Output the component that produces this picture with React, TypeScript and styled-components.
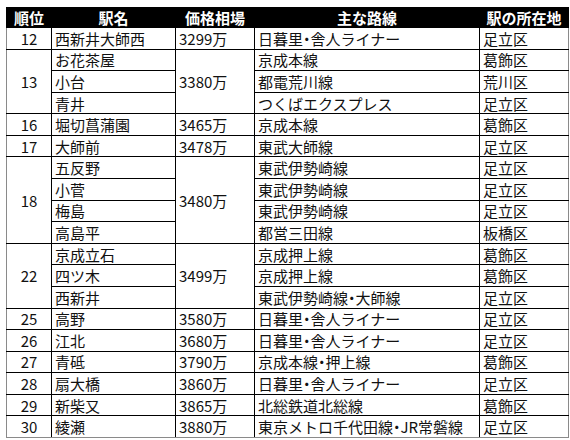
import styled, { createGlobalStyle } from "styled-components";

const GlobalStyle = createGlobalStyle`
  html, body {
    margin: 0;
    padding: 0;
    background: #fff;
  }
  body {
    font-family: "Noto Sans CJK JP", "Noto Sans", sans-serif;
  }
`;

interface Station {
  name: string;
  line: string;
  ward: string;
}

interface Group {
  rank: number;
  price: string;
  stations: Station[];
}

const groups: Group[] = [
  { rank: 12, price: "3299万", stations: [{ name: "西新井大師西", line: "日暮里・舎人ライナー", ward: "足立区" }] },
  {
    rank: 13,
    price: "3380万",
    stations: [
      { name: "お花茶屋", line: "京成本線", ward: "葛飾区" },
      { name: "小台", line: "都電荒川線", ward: "荒川区" },
      { name: "青井", line: "つくばエクスプレス", ward: "足立区" },
    ],
  },
  { rank: 16, price: "3465万", stations: [{ name: "堀切菖蒲園", line: "京成本線", ward: "葛飾区" }] },
  { rank: 17, price: "3478万", stations: [{ name: "大師前", line: "東武大師線", ward: "足立区" }] },
  {
    rank: 18,
    price: "3480万",
    stations: [
      { name: "五反野", line: "東武伊勢崎線", ward: "足立区" },
      { name: "小菅", line: "東武伊勢崎線", ward: "足立区" },
      { name: "梅島", line: "東武伊勢崎線", ward: "足立区" },
      { name: "高島平", line: "都営三田線", ward: "板橋区" },
    ],
  },
  {
    rank: 22,
    price: "3499万",
    stations: [
      { name: "京成立石", line: "京成押上線", ward: "葛飾区" },
      { name: "四ツ木", line: "京成押上線", ward: "葛飾区" },
      { name: "西新井", line: "東武伊勢崎線・大師線", ward: "足立区" },
    ],
  },
  { rank: 25, price: "3580万", stations: [{ name: "高野", line: "日暮里・舎人ライナー", ward: "足立区" }] },
  { rank: 26, price: "3680万", stations: [{ name: "江北", line: "日暮里・舎人ライナー", ward: "足立区" }] },
  { rank: 27, price: "3790万", stations: [{ name: "青砥", line: "京成本線・押上線", ward: "葛飾区" }] },
  { rank: 28, price: "3860万", stations: [{ name: "扇大橋", line: "日暮里・舎人ライナー", ward: "足立区" }] },
  { rank: 29, price: "3865万", stations: [{ name: "新柴又", line: "北総鉄道北総線", ward: "葛飾区" }] },
  { rank: 30, price: "3880万", stations: [{ name: "綾瀬", line: "東京メトロ千代田線・JR常磐線", ward: "足立区" }] },
];

const Page = styled.div`
  padding: 7px 0 0 6px;
`;

const Table = styled.table`
  border-collapse: collapse;
  table-layout: fixed;
  width: 557px;
  font-size: 15px;
  line-height: 1;
  color: #111;
`;

const HeadRow = styled.tr`
  height: 20px;
  background: #000;
`;

const HeadCell = styled.th<{ $w: number }>`
  width: ${(p) => p.$w}px;
  padding: 0;
  color: #fff;
  font-weight: 700;
  text-align: center;
  vertical-align: middle;
  border: 1px solid #000;
`;

const Row = styled.tr`
  height: 21.58px;

  &:last-child td {
    border-bottom-color: #8a8a8a;
  }
`;

const Cell = styled.td<{ $center?: boolean; $edge?: "left" | "right" }>`
  padding: 0 0 0 3px;
  text-align: ${(p) => (p.$center ? "center" : "left")};
  vertical-align: middle;
  white-space: nowrap;
  overflow: hidden;
  border: 1px solid #000;
  ${(p) => (p.$edge === "left" ? "border-left-color: #8a8a8a;" : "")}
  ${(p) => (p.$edge === "right" ? "border-right-color: #8a8a8a;" : "")}
`;

const RankCell = styled(Cell)`
  padding: 0;
`;

// the source font draws the middle dot narrow: use the proportional form
const Dot = styled.span`
  font-feature-settings: "palt" 1;
`;

const withDots = (text: string) =>
  text.split("・").map((part, i) => (
    <span key={i}>
      {i > 0 && <Dot>・</Dot>}
      {part}
    </span>
  ));

export default function App() {
  return (
    <>
      <GlobalStyle />
      <Page>
        <Table>
          <thead>
            <HeadRow>
              <HeadCell $w={44}>順位</HeadCell>
              <HeadCell $w={123}>駅名</HeadCell>
              <HeadCell $w={78}>価格相場</HeadCell>
              <HeadCell $w={224}>主な路線</HeadCell>
              <HeadCell $w={88}>駅の所在地</HeadCell>
            </HeadRow>
          </thead>
          <tbody>
            {groups.map((g) =>
              g.stations.map((s, i) => (
                <Row key={`${g.rank}-${s.name}`}>
                  {i === 0 && (
                    <RankCell $center $edge="left" rowSpan={g.stations.length}>
                      {g.rank}
                    </RankCell>
                  )}
                  <Cell>{s.name}</Cell>
                  {i === 0 && <Cell rowSpan={g.stations.length}>{g.price}</Cell>}
                  <Cell>{withDots(s.line)}</Cell>
                  <Cell $edge="right">{s.ward}</Cell>
                </Row>
              ))
            )}
          </tbody>
        </Table>
      </Page>
    </>
  );
}
